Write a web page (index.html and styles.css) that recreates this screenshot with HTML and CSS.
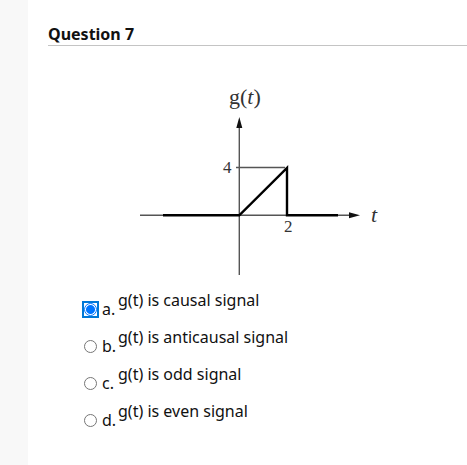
FILE: index.html
```
<!DOCTYPE html>
<html lang="en">
<head>
<meta charset="utf-8">
<title>Question 7</title>
<link rel="stylesheet" href="styles.css">
</head>
<body>
<main class="question">
  <h1 class="question-title">Question 7</h1>
  <svg class="graph" viewBox="0 0 260 200" width="260" height="200" role="img" aria-label="Graph of g(t)">
    <text class="axis-name" x="99" y="24">g(<tspan class="variable">t</tspan>)</text>
    <text class="axis-name variable" x="241" y="142">t</text>
    <text class="tick" x="93" y="93">4</text>
    <text class="tick" x="154" y="152">2</text>
    <path class="axis" d="M109.300 46V195M10 135.300H222M106 87.500H155"/>
    <path class="arrow" d="M109.300 37L112.300 48H106.300ZM230 135.300L219 138.300V132.300Z"/>
    <path class="signal" d="M33 135.300H109.300L157 88V135.300H208"/>
  </svg>
  <form class="answers">
    <div class="answer">
      <span class="radio-box selected"><input type="radio" name="answer" id="a" checked></span>
      <label class="letter" for="a">a.</label><label class="answer-text" for="a">g(t) is causal signal</label>
    </div>
    <div class="answer">
      <span class="radio-box"><input type="radio" name="answer" id="b"></span>
      <label class="letter" for="b">b.</label><label class="answer-text" for="b">g(t) is anticausal signal</label>
    </div>
    <div class="answer">
      <span class="radio-box"><input type="radio" name="answer" id="c"></span>
      <label class="letter" for="c">c.</label><label class="answer-text" for="c">g(t) is odd signal</label>
    </div>
    <div class="answer">
      <span class="radio-box"><input type="radio" name="answer" id="d"></span>
      <label class="letter" for="d">d.</label><label class="answer-text" for="d">g(t) is even signal</label>
    </div>
  </form>
</main>
</body>
</html>
```
FILE: styles.css
```
* {
  box-sizing: border-box;
}
body {
  margin: 0;
  min-height: 100vh;
  padding-left: 28px;
  background: #f8f8f8;
  color: #111;
  font: 16px/24px "Noto Sans", sans-serif;
}
.question {
  min-height: 100vh;
  padding: 23px 0 0 20px;
  background: #fff;
}
.question-title {
  margin: 0;
  border-bottom: 1px solid #c4c4c4;
  font-size: 16px;
  font-weight: 700;
  line-height: 22px;
}
.graph {
  display: block;
  margin: 34px 0 0 82px;
}
.axis-name,
.tick {
  fill: #333;
  font-family: "Liberation Serif", serif;
  font-size: 22px;
}
.tick {
  font-size: 17px;
}
.variable {
  font-style: italic;
}
.axis {
  fill: none;
  stroke: #555;
  stroke-width: 1.4;
}
.arrow {
  fill: #111;
}
.signal {
  fill: none;
  stroke: #000;
  stroke-width: 2.4;
}
.answers {
  padding: 8px 0 0 34px;
}
.answer {
  display: flex;
  align-items: flex-start;
  height: 37px;
}
.radio-box {
  display: flex;
  align-items: center;
  justify-content: center;
  width: 17px;
  height: 17px;
  margin-top: 13px;
}
.radio-box input {
  appearance: none;
  width: 13px;
  height: 13px;
  margin: 0;
  border: 1px solid #767676;
  border-radius: 50%;
  background: #fff;
}
.radio-box.selected {
  border: 2px solid #0078d7;
  background: #fff;
}
.radio-box.selected input {
  border-color: #0075ff;
  background: radial-gradient(circle, #0075ff 4px, #fff 5px);
}
.letter {
  width: 16px;
  margin: 9px 0 0 3px;
  white-space: nowrap;
}
.answer-text {
  margin-top: 0;
}
```
